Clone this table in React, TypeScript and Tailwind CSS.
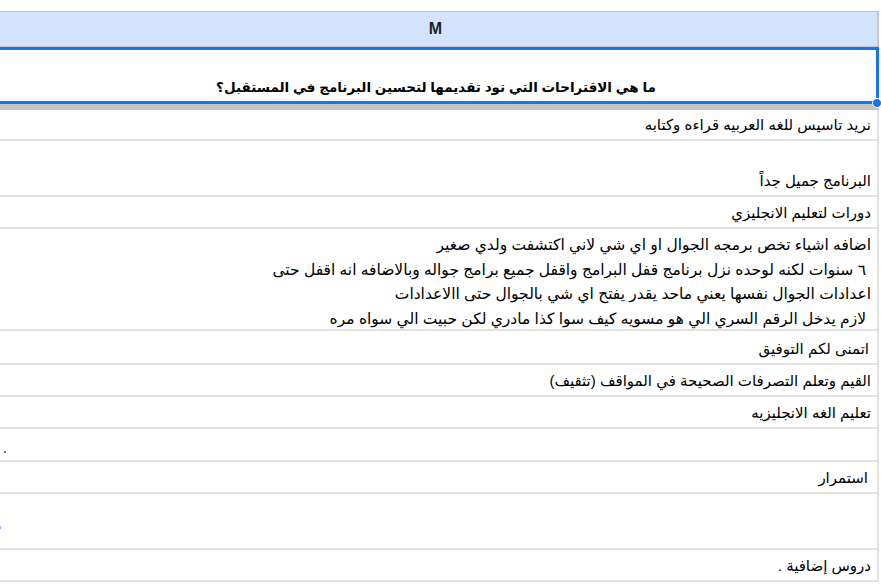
const rows: { h: string; text: string }[] = [
  { h: "h-[31px]", text: "نريد تاسيس للغه العربيه قراءه وكتابه" },
  { h: "h-[56px]", text: "البرنامج جميل جداً" },
  { h: "h-[32px]", text: "دورات لتعليم الانجليزي" },
];

const lowerRows: { h: string; text: string; pr?: string }[] = [
  { h: "h-[34px]", text: "اتمنى لكم التوفيق", pr: "pr-[8px]" },
  { h: "h-[32px]", text: "القيم وتعلم التصرفات الصحيحة في المواقف (تثقيف)" },
  { h: "h-[32px]", text: "تعليم الغه الانجليزيه" },
];

// wrapped text of the long answer, one entry per visual line
const longAnswer: { text: string; indent: boolean }[] = [
  { text: "اضافه اشياء تخص برمجه الجوال او اي شي لاني اكتشفت ولدي صغير", indent: false },
  { text: "٦ سنوات لكنه لوحده نزل برنامج قفل البرامج واقفل جميع برامج جواله وبالاضافه انه اقفل حتى", indent: true },
  { text: "اعدادات الجوال نفسها يعني ماحد يقدر يفتح اي شي بالجوال حتى االاعدادات", indent: false },
  { text: "لازم يدخل الرقم السري الي هو مسويه كيف سوا كذا مادري لكن حبيت الي سواه مره", indent: true },
];

const Cell = ({ h, text, pr = "pr-[6px]" }: { h: string; text: string; pr?: string }) => (
  <div className={`${h} border-b-2 border-[#e1e1e1] flex items-end justify-end ${pr} pb-[2px]`}>
    <span dir="rtl" className="text-[15px] leading-[25px] whitespace-nowrap text-black">
      {text}
    </span>
  </div>
);

export default function App() {
  return (
    <div
      className="w-[881px] h-[587px] bg-white overflow-hidden"
      style={{ fontFamily: '"Liberation Sans", "DejaVu Sans", sans-serif' }}
    >
      <div className="w-[879px]">
        <div className="h-[11px]" />
        <div className="h-[36px] border-y border-r-2 border-[#c4c7c5] bg-[#d3e3fd] flex items-center justify-center">
          <span className="text-[16px] font-bold text-[#1f1f1f] pr-[6px]">M</span>
        </div>
        <div className="relative h-[57px] border-y-[3px] border-r-[3px] border-[#1a73e8] flex items-end justify-center pb-[3px]">
          <span dir="rtl" className="text-[13.5px] font-bold text-black leading-[20px] pr-[4px]">
            ما هي الاقتراحات التي تود تقديمها لتحسين البرنامج في المستقبل؟
          </span>
          <div className="absolute right-[-6px] bottom-[-7px] w-[10px] h-[10px] rounded-full bg-[#1a73e8] border border-white" />
        </div>
        <div className="h-[6px] bg-[#c4c4c4]" />
        <div className="border-r-2 border-[#e1e1e1]">
          {rows.map((r, i) => (
            <Cell key={i} h={r.h} text={r.text} />
          ))}
          <div className="h-[102px] border-b-2 border-[#e1e1e1] flex flex-col items-end pt-[4px] pr-[6px]">
            {longAnswer.map((l, i) => (
              <span
                key={i}
                dir="rtl"
                className={`text-[15.5px] leading-[24.7px] whitespace-nowrap text-black ${l.indent ? "pr-[5px]" : ""}`}
              >
                {l.text}
              </span>
            ))}
          </div>
          {lowerRows.map((r, i) => (
            <Cell key={i} h={r.h} text={r.text} pr={r.pr} />
          ))}
          <div className="h-[33px] border-b-2 border-[#e1e1e1] flex items-end pl-[3px] pb-[4px]">
            <span className="text-[14px] leading-[16px] text-black">.</span>
          </div>
          <Cell h="h-[32px]" text="استمرار" pr="pr-[9px]" />
          <div className="h-[56px] border-b-2 border-[#e1e1e1] flex items-end pb-[19px]">
            <span className="w-[1px] h-[3px] bg-[#8ab4f8]" />
          </div>
          <Cell h="h-[32px]" text="دروس إضافية ." />
        </div>
      </div>
    </div>
  );
}
